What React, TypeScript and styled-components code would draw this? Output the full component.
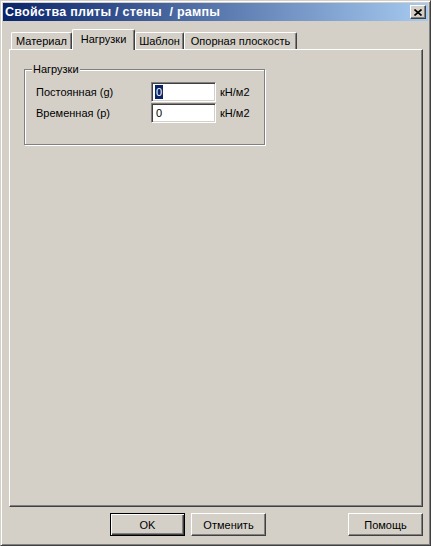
import React from 'react';
import styled, { createGlobalStyle } from 'styled-components';

const GlobalStyle = createGlobalStyle`
  html, body { margin: 0; padding: 0; background: #d4d0c8; }
  body { font-family: "Liberation Sans", Arial, sans-serif; font-size: 11px; color: #000; }
`;

const Window = styled.div`
  width: 431px;
  height: 546px;
  box-sizing: border-box;
  background: #d4d0c8;
  border: 1px solid;
  border-color: #d4d0c8 #404040 #404040 #d4d0c8;
  box-shadow: inset 1px 1px #fff, inset -1px -1px #808080;
  padding: 2px;
  display: flex;
  flex-direction: column;
`;

const TitleBar = styled.div`
  height: 18px;
  flex: none;
  display: flex;
  align-items: center;
  padding-left: 2px;
  background: linear-gradient(to right, #0a246a, #a6caf0);
  color: #fff;
  font-weight: bold;
  font-size: 12.5px;
  letter-spacing: 0.25px;
  white-space: pre;
`;

const TitleText = styled.span`
  flex: 1;
`;

const CloseBtn = styled.div`
  width: 16px;
  height: 14px;
  margin-right: 2px;
  box-sizing: border-box;
  background: #d4d0c8;
  border: 1px solid;
  border-color: #fff #404040 #404040 #fff;
  box-shadow: inset -1px -1px #808080;
  display: flex;
  align-items: center;
  justify-content: center;
`;

const Body = styled.div`
  flex: 1;
  display: flex;
  flex-direction: column;
  padding: 8px 5px 7px 6px;
`;

const TabStrip = styled.div`
  height: 20px;
  display: flex;
  align-items: flex-end;
  padding-left: 2px;
  position: relative;
  z-index: 1;
`;

const Tab = styled.div<{ $active?: boolean; $w: number }>`
  width: ${p => p.$w}px;
  height: ${p => (p.$active ? 21 : 17)}px;
  margin-bottom: ${p => (p.$active ? -1 : 0)}px;
  box-sizing: border-box;
  background: #d4d0c8;
  border-top: 1px solid #fff;
  border-left: 1px solid #fff;
  border-right: 1px solid #404040;
  border-top-left-radius: 2px;
  border-top-right-radius: 2px;
  box-shadow: inset -1px 0 #808080;
  display: flex;
  align-items: center;
  justify-content: center;
  padding-bottom: ${p => (p.$active ? 3 : 0)}px;
  white-space: nowrap;
`;

const Panel = styled.div`
  height: 458px;
  box-sizing: border-box;
  border: 1px solid;
  border-color: #fff #404040 #404040 #fff;
  box-shadow: inset -1px -1px #808080;
  padding: 19px 0 0 14px;
`;

const GroupBox = styled.div`
  position: relative;
  width: 241px;
  height: 76px;
  box-sizing: border-box;
  border: 1px solid #808080;
  box-shadow: inset 1px 1px #fff, 1px 1px #fff;
  padding: 12px 0 0 11px;
  display: flex;
  flex-direction: column;
  gap: 1px;
`;

const Caption = styled.span`
  position: absolute;
  top: -7px;
  left: 7px;
  padding: 0 1px;
  line-height: 13px;
  background: #d4d0c8;
`;

const Row = styled.div`
  display: grid;
  grid-template-columns: 115px 65px auto;
  align-items: center;
  height: 20px;
`;

const Label = styled.span`
  line-height: 13px;
`;

const Field = styled.div`
  height: 20px;
  box-sizing: border-box;
  background: #fff;
  border: 1px solid;
  border-color: #808080 #fff #fff #808080;
  box-shadow: inset 1px 1px #404040, inset -1px -1px #d4d0c8;
  padding: 2px 0 0 3px;
  line-height: 14px;
`;

const Value = styled.span<{ $selected?: boolean }>`
  display: inline-block;
  padding: 0 1px;
  background: ${p => (p.$selected ? '#0a246a' : 'transparent')};
  color: ${p => (p.$selected ? '#fff' : '#000')};
`;

const Unit = styled.span`
  margin-left: 4px;
`;

const ButtonRow = styled.div`
  display: flex;
  gap: 6px;
  margin-top: 6px;
  padding-left: 101px;
`;

const Button = styled.div<{ $default?: boolean }>`
  width: 75px;
  height: 23px;
  box-sizing: border-box;
  background: #d4d0c8;
  display: flex;
  align-items: center;
  justify-content: center;
  border: 1px solid;
  border-color: ${p => (p.$default ? '#000' : '#fff #404040 #404040 #fff')};
  box-shadow: ${p =>
    p.$default
      ? 'inset 1px 1px #fff, inset -1px -1px #404040, inset -2px -2px #808080'
      : 'inset -1px -1px #808080'};
`;

const PushRight = styled.div`
  margin-left: auto;
`;

const tabs = [
  { label: 'Материал', w: 61 },
  { label: 'Нагрузки', w: 63, active: true },
  { label: 'Шаблон', w: 49 },
  { label: 'Опорная плоскость', w: 113 },
];

const App = () => {
  return (
    <>
      <GlobalStyle />
      <Window>
        <TitleBar>
          <TitleText>Свойства плиты / стены  / рампы</TitleText>
          <CloseBtn>
            <svg width="8" height="7" viewBox="0 0 8 7">
              <path d="M0.5 0.5 L7.5 6.5 M7.5 0.5 L0.5 6.5" stroke="#000" strokeWidth="1.6" />
            </svg>
          </CloseBtn>
        </TitleBar>
        <Body>
          <TabStrip>
            {tabs.map(t => (
              <Tab key={t.label} $w={t.w} $active={t.active}>
                {t.label}
              </Tab>
            ))}
          </TabStrip>
          <Panel>
            <GroupBox>
              <Caption>Нагрузки</Caption>
              <Row>
                <Label>Постоянная (g)</Label>
                <Field>
                  <Value $selected>0</Value>
                </Field>
                <Unit>кН/м2</Unit>
              </Row>
              <Row>
                <Label>Временная (p)</Label>
                <Field>
                  <Value>0</Value>
                </Field>
                <Unit>кН/м2</Unit>
              </Row>
            </GroupBox>
          </Panel>
          <ButtonRow>
            <Button $default>OK</Button>
            <Button>Отменить</Button>
            <PushRight>
              <Button>Помощь</Button>
            </PushRight>
          </ButtonRow>
        </Body>
      </Window>
    </>
  );
};

export default App;
